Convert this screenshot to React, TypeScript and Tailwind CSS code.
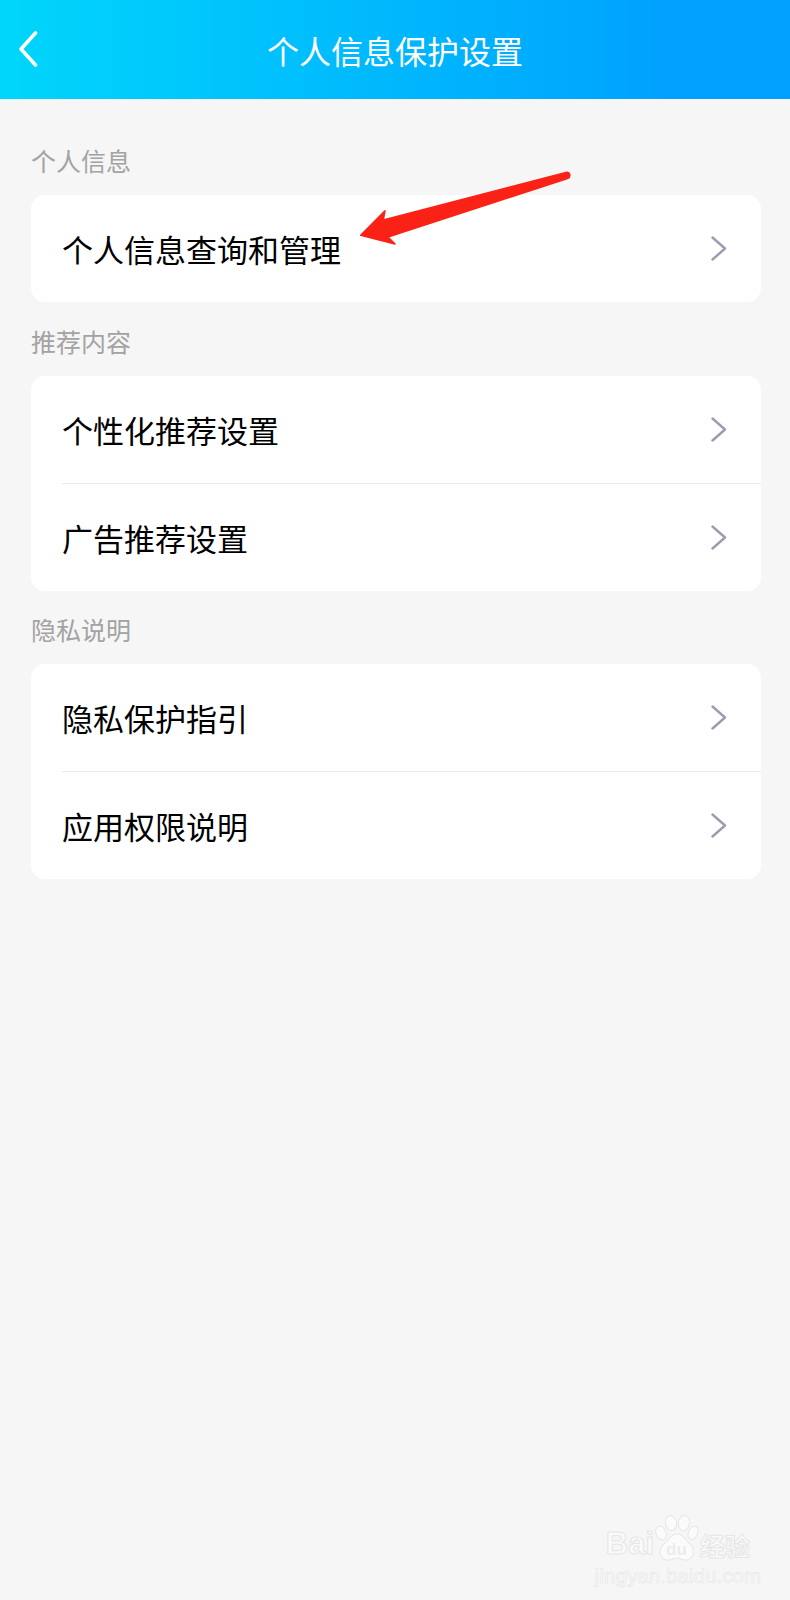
import { Fragment } from "react";

const cjk = "font-['Noto_Sans_CJK_SC','Liberation_Sans',sans-serif]";

const sections = [
  { title: "个人信息", items: ["个人信息查询和管理"] },
  { title: "推荐内容", items: ["个性化推荐设置", "广告推荐设置"] },
  { title: "隐私说明", items: ["隐私保护指引", "应用权限说明"] },
];

const RowChevron = () => (
  <svg width="16" height="25" viewBox="0 0 16 25" fill="none" className="shrink-0">
    <path d="M1.5 1.5 14 12.5 1.5 23.5" stroke="#9b9daf" strokeWidth="2.4" strokeLinecap="round" strokeLinejoin="round" />
  </svg>
);

const App = () => {
  return (
    <div className={`relative w-full min-h-[1600px] overflow-hidden bg-[#f6f6f6] ${cjk}`}>
      <div className="flex h-[99px] items-center justify-center bg-gradient-to-r from-[#00d6fb] to-[#00a1fe] to-85% relative">
        <svg width="20" height="36" viewBox="0 0 20 36" fill="none" className="absolute left-[18px] top-[31px]">
          <path d="M17.5 2 3 18l14.5 16" stroke="#ffffff" strokeWidth="3.6" strokeLinecap="round" strokeLinejoin="round" />
        </svg>
        <h1 className="text-[32px] leading-none font-normal text-white">个人信息保护设置</h1>
      </div>

      <div className="flex flex-col pl-[31px] pr-[29px] pt-[46px]">
        {sections.map((section) => (
          <Fragment key={section.title}>
            <p className="h-[50px] text-[25px] leading-[31px] text-[#a3a3a3]">{section.title}</p>
            <div className="mb-[23px] first-of-type:mb-[24px] rounded-[14px] bg-white">
              {section.items.map((item, i) => (
                <Fragment key={item}>
                  {i > 0 && <div className="ml-[31px] h-px bg-[#e9e9e9]" />}
                  <div className="flex h-[107px] items-center justify-between pl-[31px] pr-[34px]">
                    <span className="text-[31px] leading-none text-black">{item}</span>
                    <RowChevron />
                  </div>
                </Fragment>
              ))}
            </div>
          </Fragment>
        ))}
      </div>

      {/* red arrow drawn over the first row */}
      <svg width="220" height="90" viewBox="0 0 220 90" className="absolute left-[355px] top-[165px]">
        <path
          d="M5.7 70.3 30 45.7 28.3 55 211 7.5C215 6.5 216.5 11.5 212.5 13.5L33 72 40 79Z"
          fill="#fa2216"
          stroke="#fa2216"
          strokeWidth="1.5"
          strokeLinejoin="round"
        />
      </svg>

      {/* watermark */}
      <div className="absolute left-[605px] top-[1514px] flex w-[146px] flex-col items-center text-[#fafafa] [-webkit-text-stroke:1px_#e6e6e6]">
        <div className="flex h-[52px] items-end">
          <span className="font-['Liberation_Sans',sans-serif] text-[31px] leading-[44px] font-bold">Bai</span>
          <div className="relative mx-[1px]">
            <svg width="44" height="52" viewBox="0 0 44 52" fill="#fbfbfb" stroke="#e6e6e6" strokeWidth="1" className="block">
              <ellipse cx="6" cy="19" rx="5" ry="7" transform="rotate(-25 6 19)" />
              <ellipse cx="16" cy="9" rx="5.5" ry="7.5" transform="rotate(-8 16 9)" />
              <ellipse cx="29" cy="9" rx="5.5" ry="7.5" transform="rotate(8 29 9)" />
              <ellipse cx="38" cy="19" rx="4.5" ry="7" transform="rotate(25 38 19)" />
              <path d="M22 20c6 0 8 6 13 10 6 5 4 17-5 16-3 0-5-2-8-2s-5 2-9 2c-8 0-11-10-4-16 5-4 7-10 13-10Z" />
            </svg>
            <span className="absolute left-[11px] top-[27px] font-['Liberation_Sans',sans-serif] text-[17px] leading-none font-bold text-[#ececec] [-webkit-text-stroke:0px_transparent]">du</span>
          </div>
          <span className="text-[25px] leading-[42px] font-bold">经验</span>
        </div>
        <span className="font-['Liberation_Sans',sans-serif] text-[20px] leading-[20px] tracking-[0.3px] [-webkit-text-stroke:0.6px_#e6e6e6]">jingyan.baidu.com</span>
      </div>
    </div>
  );
};

export default App;
